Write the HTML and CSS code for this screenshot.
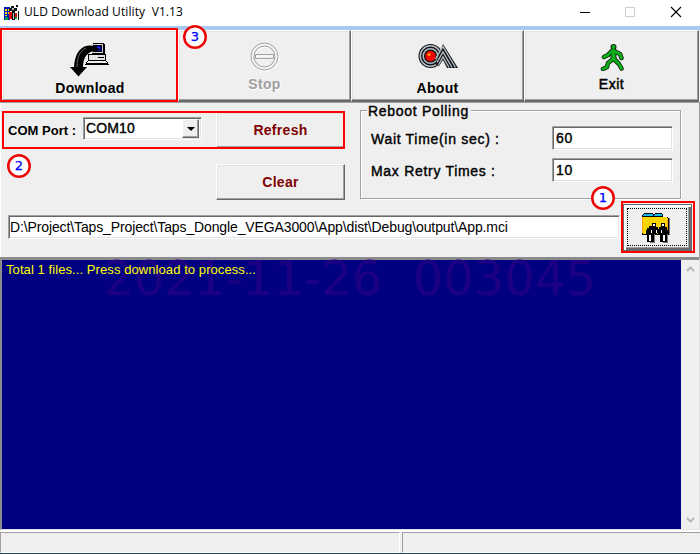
FILE: index.html
```html
<!DOCTYPE html>
<html lang="en">
<head>
<meta charset="utf-8">
<title>ULD Download Utility</title>
<link rel="stylesheet" href="styles.css">
</head>
<body>
<div class="window">
  <header class="titlebar">
    <svg class="app-icon" width="16" height="16" viewBox="0 0 16 16" shape-rendering="crispEdges">
      <path fill="#001cc8" d="M0 3h6v13H0z"/><path fill="#f6df00" d="M1 5h2v2H1zM4 5h1v2H4zM1 8h2v2H1zM4 8h1v2H4zM1 11h2v1H1z"/>
      <path fill="#d90909" d="M5 8h3v7H5zM11 9h2v6h-2z"/><path fill="#111" d="M5 4h2V2h3v2h3v3h-2v2H8V7H5zM8 9h3v7H8zM12 1h2v2h-2zM14 7h1v9h-1z"/><path fill="#b9c4c6" d="M8 4h2v2H8zM9 9h1v6H9z"/><path fill="#08a64b" d="M1 13h3v3H1zM11 13h2v2h-2z"/>
    </svg>
    <span class="title">ULD Download Utility&nbsp; V1.13</span>
    <svg class="controls" width="102" height="12" viewBox="0 0 102 12" fill="none">
      <path d="M0 6.5h10" stroke="#000"/><path d="M45.5 1.5h9v9h-9z" stroke="#ccc"/><path d="M91 1l10 10M101 1L91 11" stroke="#000" stroke-width="1.1"/>
    </svg>
  </header>
  <nav class="toolbar">
    <button class="tool"><svg width="40" height="34" viewBox="0 0 40 34">
      <g shape-rendering="crispEdges"><path fill="#000" d="M23 0h11v1h1v10H22V1z"/><path fill="#d9d9d9" d="M22 1h11v9H22z"/><path fill="#000" d="M23 2h9v7h-9z"/><path fill="#0000a8" d="M24 3h7v5h-7z"/><path fill="#33f" d="M27 4h3v2h-3z"/><path fill="#000" d="M18 11h18v7H18z"/><path fill="#e4e4e4" d="M19 12h16v5H19z"/><path fill="#000" d="M28 14h6v1h-6zM17 18h20l2 4H15z"/><path fill="#eee" d="M18 18h18l1 2H17z"/><path stroke="#000" stroke-dasharray="1 1" d="M19 20.500h17"/></g>
      <path fill="#000" d="M30 6C18-2 5 4 4 24H0l8.500 9.500L17 24h-4c0-10 5-16 13-16z"/><path d="M7 24C7 14 10 8 16 5" fill="none" stroke="#666"/>
    </svg><span class="label wide">Download</span></button>
    <button class="tool off"><svg width="30" height="30" viewBox="0 0 30 30" fill="none">
      <g stroke="#fff" transform="translate(1 1)"><circle cx="14.500" cy="14.500" r="13.500"/><circle cx="14.500" cy="14.500" r="10.500"/><path d="M6 13h17v3H6z"/></g><g stroke="#a0a0a0"><circle cx="14.500" cy="14.500" r="13.500"/><circle cx="14.500" cy="14.500" r="10.500"/><path d="M5.500 12.500h18v4h-18z"/></g>
    </svg><span class="label">Stop</span></button>
    <button class="tool"><svg width="40" height="26" viewBox="0 0 40 26" fill="none">
      <circle cx="12.500" cy="12" r="12" fill="#141414"/><circle cx="12.500" cy="12" r="10.200" stroke="#b4bec8" stroke-width="1.500"/><circle cx="12.500" cy="12" r="7.300" stroke="#b4bec8" stroke-width="1.500"/>
      <path fill="#141414" d="M25 0L40 24H29l-4-8-4 6-4-2z"/><path d="M17.500 15L25 2.500l12.500 21M19 18.500l6-10.500 9 15.500M20.500 21l4.500-8 6 10.500" stroke="#b4bec8" stroke-width="1.400"/>
      <circle cx="12.500" cy="12" r="5.200" fill="#f20500"/><circle cx="11" cy="10.500" r="1.500" fill="#ff9500"/>
    </svg><span class="label">About</span></button>
    <button class="tool"><svg width="24" height="27" viewBox="0 0 24 27">
      <g fill="none" stroke-linecap="round" stroke-linejoin="round">
        <g stroke="#102a10" stroke-width="4.600"><path d="M12 7L8 11l-4 2M14 7l6 3 1.500 4M13 15l-5 4-1 4-4 2M14 15l5 5 2.500 4.500"/><path d="M13.500 7v8" stroke-width="6"/></g><circle cx="13.500" cy="3" r="3" fill="#102a10"/>
        <g stroke="#0caf18" stroke-width="2.800"><path d="M12 7L8 11l-4 2M14 7l6 3 1.500 4M13 15l-5 4-1 4-4 2M14 15l5 5 2.500 4.500"/><path d="M13.500 7v8" stroke-width="4"/></g><circle cx="13.500" cy="3" r="2" fill="#0caf18"/>
      </g>
    </svg><span class="label medium">Exit</span></button>
  </nav>
  <main class="form">
    <div class="settings">
      <div class="port-column">
        <div class="port-row"><label class="port-label">COM Port :</label>
          <div class="combo sunken"><span class="value">COM10</span><span class="drop"><i></i></span></div>
          <button class="command refresh">Refresh</button></div>
        <button class="command clear">Clear</button>
      </div>
      <section class="group">
        <h2>Reboot Polling</h2>
        <div class="field"><label>Wait Time(in sec) :</label><div class="entry sunken">60</div></div>
        <div class="field"><label>Max Retry Times :</label><div class="entry sunken">10</div></div>
      </section>
    </div>
    <div class="file-row">
      <div class="path sunken">D:\Project\Taps_Project\Taps_Dongle_VEGA3000\App\dist\Debug\output\App.mci</div>
      <button class="browse"><svg width="30" height="30" viewBox="0 0 30 30" shape-rendering="crispEdges">
        <path fill="#777" d="M27 5h2v17h-2z"/><path fill="#000" d="M1 4h25l2 2v16H1z"/><path fill="#f8d400" d="M2 4h23l2 2v15H2z"/><path fill="#ffa000" d="M1 4h1v16H1zM26 6h1v14h-1z"/><path fill="#000" d="M2 1h1V0h9v1h2V0h7v1h1v3H1V2z"/><path fill="#10b8f8" d="M3 1h9v2H2zM14 1h7v2h-9z"/>
        <path fill="#777" d="M12 20h2v10h-5v-1h3zM25 20h2v10h-5v-1h3z"/><path fill="#000" d="M11 10h4v4h2v2h1v-2h2v-4h4v4h2v3h1v4h-1v8h-7v-8h-2v-1h-1v1h-3v8H6v-8H5v-4h1v-2h2v-2h3z"/><path fill="#fff" d="M12 11h2v2h-2zM21 11h2v2h-2zM10 17h1v3h-1zM15 17h1v3h-1zM20 17h1v3h-1zM8 22h2v6H8zM22 22h2v6h-2z"/>
      </svg></button>
    </div>
  </main>
  <section class="console">
    <div class="output"><div class="stamp">2021-11-26&nbsp; 003045</div><span class="message">Total 1 files... Press download to process...</span></div>
    <div class="scrollbar"><svg width="9" height="6" viewBox="0 0 9 6"><path d="M1 5l3.500-3.500L8 5"/></svg><svg width="9" height="6" viewBox="0 0 9 6"><path d="M1 1l3.500 3.500L8 1"/></svg></div>
  </section>
  <footer class="status"><div class="cell"></div><div class="cell"></div></footer>
  <div class="mark mark-download"></div><div class="mark mark-port"></div><div class="mark mark-browse"></div>
  <span class="badge badge-one">1</span><span class="badge badge-two">2</span><span class="badge badge-three">3</span>
</div>
</body>
</html>
```

FILE: styles.css
```css
* { box-sizing: border-box; }
body { margin: 0; font: 14px/16px "Liberation Sans", sans-serif; color: #000; }
button { margin: 0; padding: 0; font: inherit; color: inherit; background: #efefef; border: 0; border-radius: 0; }
svg { display: block; flex: none; }

.window { position: relative; width: 700px; height: 554px; display: flex; flex-direction: column; background: #efefef; overflow: hidden; }
.titlebar { height: 26px; flex: none; display: flex; align-items: center; padding: 0 18px 2px 4px; background: #fff; }
.app-icon { margin-right: 4px; }
.title { font: 12px/16px "Open Sans", sans-serif; letter-spacing: .1px; white-space: nowrap; }
.controls { margin-left: auto; }

.toolbar { height: 77px; flex: none; display: grid; grid-template-columns: 176px 173px 173px 175px; border-top: 4px solid #a6caf0; border-bottom: 1px solid #a0a0a0; padding: 0 1px 0 2px; }
.tool { display: flex; flex-direction: column; align-items: center; padding-top: 12px; border: solid; border-width: 1px 1px 2px; border-color: #fff #696969 #696969 #fff; box-shadow: inset -1px -1px #a0a0a0, inset 1px 1px #e3e3e3; }
.tool svg { margin-bottom: 3px; }
.tool:nth-child(2) { padding-top: 11px; }
.tool:nth-child(2) svg { margin-bottom: 4px; }
.tool:nth-child(3) svg { margin: 1px 0 10px; }
.tool:nth-child(4) svg { margin: 1px 0 5px; }
.label { font-weight: bold; letter-spacing: .3px; }
.label.medium { font-weight: normal; -webkit-text-stroke: .5px; letter-spacing: .5px; }
.off { color: #a0a0a0; text-shadow: 1px 1px #fff; }

.form { height: 154px; flex: none; padding: 5px 6px 0 7px; border-left: 1px solid #fff; border-right: 1px solid #a0a0a0; }
.settings { height: 96px; display: flex; }
.port-column { width: 337px; margin-right: 15px; padding-top: 4px; }
.port-row { display: flex; height: 36px; margin-bottom: 16px; }
.port-label { width: 75px; padding-top: 11px; font-weight: bold; font-size: 13px; letter-spacing: .02px; }
.sunken { background: #fff; border: 1px solid; border-color: #a0a0a0 #fff #fff #a0a0a0; box-shadow: inset 1px 1px #696969, inset -1px -1px #e3e3e3; }
.combo { width: 119px; height: 23px; margin-top: 5px; display: flex; justify-content: space-between; padding: 1px 2px 1px 1px; }
.value { padding: 1px 0 0 1px; -webkit-text-stroke: .4px; letter-spacing: .15px; }
.drop { width: 17px; display: flex; align-items: center; justify-content: center; background: #efefef; border: 1px solid; border-color: #fff #696969 #696969 #fff; box-shadow: inset -1px -1px #a0a0a0; }
.drop i { border: 4px solid transparent; border-top-color: #000; border-bottom: 0; }
.command { width: 129px; height: 36px; border: 1px solid; border-color: #fff #696969 #696969 #fff; box-shadow: inset -1px -1px #a0a0a0, inset 1px 1px #e3e3e3; color: #800000; font-weight: bold; letter-spacing: .3px; }
.refresh { margin-left: 14px; }
.clear { display: block; margin-left: 208px; }
.group { width: 321px; height: 89px; margin-top: 2px; border: 1px solid #a0a0a0; box-shadow: 1px 1px #fff, inset 1px 1px #fff; padding-left: 10px; -webkit-text-stroke: .4px; letter-spacing: .7px; }
.group h2 { width: 104px; margin: -8px 0 7px -4px; padding-left: 1px; font: inherit; white-space: nowrap; background: #efefef; }
.field { display: flex; height: 24px; margin-bottom: 8px; }
.field label { width: 181px; padding-top: 5px; }
.entry { width: 121px; height: 24px; padding: 3px; }
.file-row { display: flex; }
.path { width: 612px; height: 24px; margin: 11px 3px 0 0; padding: 3px 1px; letter-spacing: -.12px; white-space: nowrap; }
.browse { width: 69px; height: 47px; display: flex; align-items: center; justify-content: center; padding-right: 3px; border: 1px solid #696969; box-shadow: inset 2px 2px #fff, inset -2px -2px #696969, inset -3px -3px #a0a0a0; position: relative; }
.browse::after { content: ""; position: absolute; inset: 3px 4px 4px 3px; border: 1px dotted #000; }

.console { height: 273px; flex: none; display: flex; border: solid; border-width: 3px 1px 1px 2px; border-color: #8b8b8b #e3e3e3 #e3e3e3 #8b8b8b; }
.output { flex: 1; position: relative; padding: 2px 4px; background: #000080; color: #ff0; font-size: 13px; }
.message { position: relative; letter-spacing: .08px; white-space: nowrap; }
.stamp { position: absolute; left: 101px; top: -10px; font: 48px/56px "DejaVu Sans", sans-serif; color: #1c0084; white-space: nowrap; }
.scrollbar { width: 18px; display: flex; flex-direction: column; align-items: center; justify-content: space-between; padding: 6px 0; background: #efefef; }
.scrollbar path { fill: none; stroke: #b8b8b8; stroke-width: 2; }
.status { height: 24px; display: grid; grid-template-columns: 400px 299px; gap: 2px; border-top: 2px solid #fff; border-bottom: 1px solid #26465a; }
.cell { border: 1px solid; border-color: #a0a0a0 #fff #fff #a0a0a0; }

.mark { position: absolute; border: 2px solid #f00; }
.mark-download { left: 0; top: 28px; width: 178px; height: 74px; }
.mark-port { left: 2px; top: 111px; width: 343px; height: 38px; }
.mark-browse { left: 621px; top: 201px; width: 74px; height: 52px; }
.badge { position: absolute; width: 24px; height: 24px; border-radius: 50%; background: #fff; box-shadow: inset 0 0 0 2.5px #ed0505; color: #00f; font: 13px/24px "DejaVu Sans", sans-serif; -webkit-text-stroke: .25px; text-align: center; }
.badge-one { left: 591px; top: 186px; }
.badge-two { left: 7px; top: 154px; }
.badge-three { left: 183px; top: 25px; }
```
